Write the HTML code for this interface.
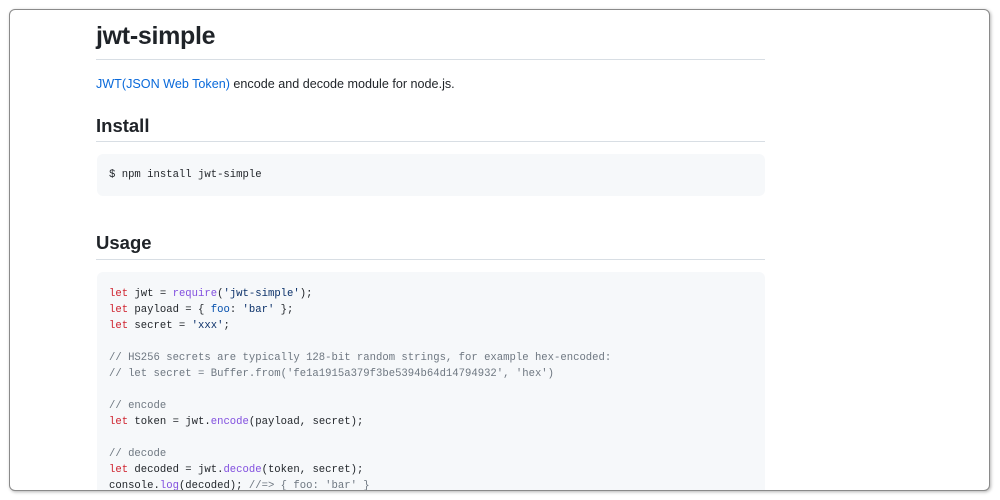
<!DOCTYPE html>
<html><head><meta charset="utf-8"><style>
html,body{margin:0;padding:0;background:#fff;width:1000px;height:500px;overflow:hidden}
.frame{position:absolute;left:9px;top:9px;width:979px;height:480px;border:1.5px solid #8a8a8a;border-radius:6px;overflow:hidden;background:#fff;box-shadow:1px 1px 3px rgba(0,0,0,.3)}
.c{position:absolute;left:86px;width:669px;font-family:"Liberation Sans",sans-serif;color:#1f2328}
h1{position:absolute;left:0;top:12px;margin:0;font-size:25px;font-weight:bold;letter-spacing:-0.3px}
.hr{position:absolute;left:0;width:669px;height:1px;background:#d8dee4}
p{position:absolute;left:0;top:67px;margin:0;font-size:12.6px}
a{color:#0969da;text-decoration:none}
h2{position:absolute;left:0;margin:0;font-size:18.5px;font-weight:bold}
pre{position:absolute;left:1px;width:668px;margin:0;background:#f6f8fa;border-radius:6px;font-family:"Liberation Mono",monospace;font-size:10.6px;line-height:16px;color:#1f2328;padding:0 12px;box-sizing:border-box}
.k{color:#cf222e}.f{color:#8250df}.s{color:#0a3069}.m{color:#6e7781}.p{color:#0550ae}
</style></head><body>
<div class="frame">
<div class="c">
<h1>jwt-simple</h1>
<div class="hr" style="top:49px"></div>
<p><a>JWT(JSON Web Token)</a> encode and decode module for node.js.</p>
<h2 style="top:105px">Install</h2>
<div class="hr" style="top:131px"></div>
<pre style="top:144px;height:42px;padding-top:13px">$ npm install jwt-simple</pre>
<h2 style="top:222px">Usage</h2>
<div class="hr" style="top:249px"></div>
<pre style="top:262px;height:240px;padding-top:14px"><span class="k">let</span> jwt = <span class="f">require</span>(<span class="s">'jwt-simple'</span>);
<span class="k">let</span> payload = { <span class="p">foo</span>: <span class="s">'bar'</span> };
<span class="k">let</span> secret = <span class="s">'xxx'</span>;

<span class="m">// HS256 secrets are typically 128-bit random strings, for example hex-encoded:</span>
<span class="m">// let secret = Buffer.from('fe1a1915a379f3be5394b64d14794932', 'hex')</span>

<span class="m">// encode</span>
<span class="k">let</span> token = jwt.<span class="f">encode</span>(payload, secret);

<span class="m">// decode</span>
<span class="k">let</span> decoded = jwt.<span class="f">decode</span>(token, secret);
console.<span class="f">log</span>(decoded); <span class="m">//=&gt; { foo: 'bar' }</span></pre>
</div>
</div>
</body></html>
